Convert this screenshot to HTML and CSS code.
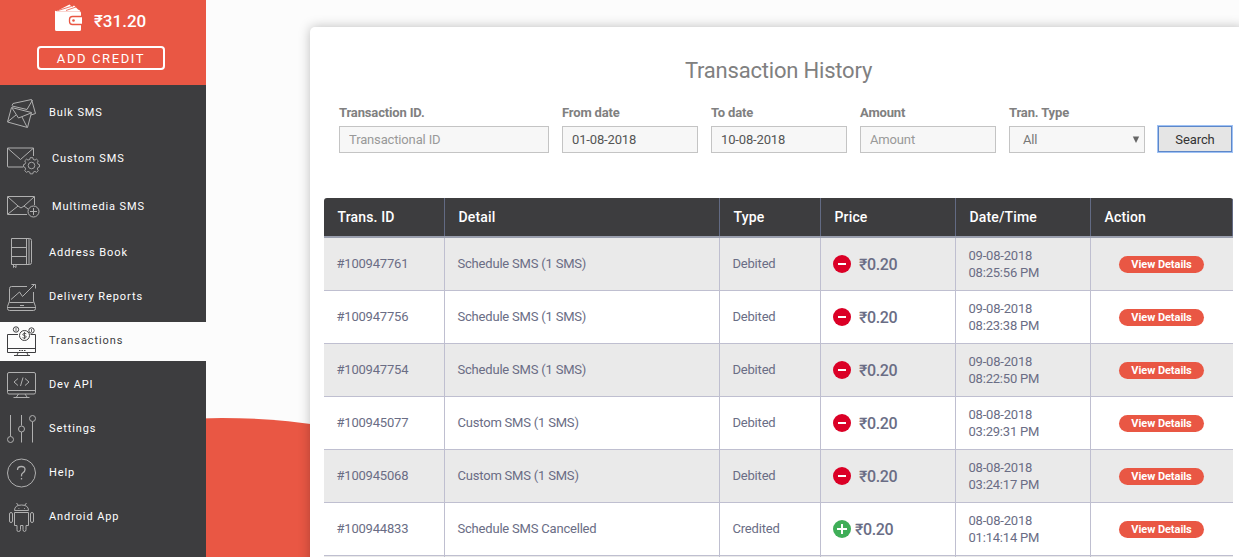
FILE: index.html
```html
<!DOCTYPE html>
<html lang="en">
<head>
<meta charset="utf-8">
<title>Transaction History</title>
<link rel="stylesheet" href="styles.css">
</head>
<body>
<div class="app">
  <aside class="sidebar">
    <div class="wallet">
      <div class="balance">
        <svg class="wallet-icon" width="28" height="28" viewBox="54 4 28 28"><path fill="#fff" d="M57 11 69.500 4.500 72 7 74 5.500 78 9.500 80 10.500V11Z"/><path d="m58 10.500 13-4M66 10.500l10-3.500" stroke="#e95744" stroke-width=".8" fill="none"/><path fill="#fff" d="M55 10.500q0 .8 2 .8H79.500Q81 11.500 81 13V29.500Q81 31 79.500 31H56.500Q55 31 55 29.500Z"/><path fill="#fff" stroke="#e95744" stroke-width="1.300" d="M83 16.500H72.500Q69.500 16.500 69.500 19.500V21.500Q69.500 24.500 72.500 24.500H83"/><circle cx="73.500" cy="20.500" r="1.300" fill="#e95744"/></svg>
        <span>₹31.20</span>
      </div>
      <button class="add-credit">ADD CREDIT</button>
    </div>
    <nav class="menu">
      <a class="item"><svg width="44" height="39" viewBox="0 94 44 39"><path d="m12 105.500 1-2 18.500-4 4 14-4.500 1.500M12 106l15 3.500 5.500-9.500M11.500 107.500l20 5-4 15-20-5.500ZM12 108l6.500 10 12.500-5M8 121.500l8-6.500M27 127l-5-10"/></svg><span>Bulk SMS</span></a>
      <a class="item tall"><svg width="44" height="43" viewBox="0 138 44 43"><path d="M23 167H8Q7.500 167 7.500 166V148H33.500V156M8 148.500 20.500 159.500 33 148.500"/><g transform="translate(31.500 165.500) scale(.87) translate(-31.500 -166.500)"><circle cx="31.500" cy="166.500" r="3.800"/><path d="M30 157.500h3l.5 2 2 .8 1.800-1.100 2 2-1.100 1.800.8 2 1.700.5v2.600l-1.700.5-.8 2 1.100 1.800-2 2-1.800-1.100-2 .8-.5 2h-3l-.5-2-2-.8-1.800 1.100-2-2 1.100-1.800-.8-2-1.700-.5V165.500l1.700-.5.8-2-1.100-1.800 2-2 1.800 1.100 2-.8Z"/></g></svg><span>Custom SMS</span></a>
      <a class="item tall"><svg width="44" height="43" viewBox="0 186 44 43"><path d="M27 214.500H7.500V196.500H34.500V205M8 197l10 9 3 2 3-2 10-9M8 214l10-8M24 206l4 3"/><circle cx="33.500" cy="211.500" r="5.500"/><path d="M30 211.500h7M33.500 208v7"/></svg><span>Multimedia SMS</span></a>
      <a class="item"><svg width="44" height="39" viewBox="0 234 44 39"><path d="M11.500 238.500H29.500Q31.500 238.500 31.500 240.500V262.500Q31.500 264.500 29.500 264.500H11.500ZM26.500 238.500v26M29 238.500v26M11.500 247.500h15M11.500 256.500h15M13.500 265v2.500l1-1 1.500 1V265"/></svg><span>Address Book</span></a>
      <a class="item"><svg width="44" height="39" viewBox="0 278 44 39"><path d="M27 286.500H11.500Q9.500 286.500 9.500 288.500V301L7.500 306.500V308.500Q7.500 310.500 9.500 310.500H33.500Q35.500 310.500 35.500 308.500V306.500L33.500 301V292M9.500 302.500H33.500M7.500 307.500h28M11 299.500l8.500-7.500 3 4.500 12.500-12.500M31.500 284.500h4v4M20 305.500h4"/></svg><span>Delivery Reports</span></a>
      <a class="item active"><svg width="44" height="39" viewBox="0 322 44 39"><path d="M18 334.500H7.500V352.500H35.500V334.500H30.500M7.500 348.500h28M18 353l-1 2M27 353l1 2M14 355.500h16M19 350.500h1.500M21.500 350.500H23M24 350.500h1.500"/><circle cx="24.500" cy="335.500" r="5"/><circle cx="16" cy="329.500" r="2.700"/><circle cx="31.500" cy="330.500" r="2.700"/><path stroke-width=".8" d="M26.300 333.800q-1.800-1.300-3.200 0t1.400 1.800 1.400 2-3.400 0M24.500 331.800v7.400M16 328v3M31.500 329v3"/></svg><span>Transactions</span></a>
      <a class="item"><svg width="44" height="39" viewBox="0 366 44 39"><path d="M9 372.500H34Q35.500 372.500 35.500 374V392.500Q35.500 394 34 394H9Q7.500 394 7.500 392.500V374Q7.500 372.500 9 372.500ZM7.500 390.500h28M18.500 394l-2 3M25 394l2 3M13.500 397.500h16M18 378.500l-4 3.500 4 3.500M25 378.500l4 3.500-4 3.500M23 377.500l-2.500 8.500"/></svg><span>Dev API</span></a>
      <a class="item"><svg width="44" height="39" viewBox="0 410 44 39"><path d="M10.500 415v21M21.500 415v10.500M21.500 432v10.500M32.500 422v20.500"/><circle cx="10.500" cy="439.500" r="3"/><circle cx="21.500" cy="429" r="3"/><circle cx="32.500" cy="418.500" r="3"/></svg><span>Settings</span></a>
      <a class="item"><svg width="44" height="39" viewBox="0 454 44 39"><circle cx="21.500" cy="473" r="14"/><path stroke-width="1.300" d="M17.500 470q0-3.500 3.800-3.500t3.700 3q0 2-2 3.300t-1.500 3.500M21.500 478v1.500"/></svg><span>Help</span></a>
      <a class="item"><svg width="44" height="39" viewBox="0 498 44 39"><path d="M14.500 510.500q0-5.500 7-5.500t7 5.500ZM16.500 503l2 2.500M26.500 503l-2 2.500M18.500 508.500h.8M24 508.500h.8M14.500 512.500H28.500V525.500H26V529.500Q26 531.500 24.500 531.500T23 529.500V525.500H20.500V529.500Q20.500 531.500 18.500 531.500T17 529.500V525.500H14.500Z"/><rect x="9.500" y="512.500" width="3" height="10" rx="1.500"/><rect x="30.500" y="512.500" width="3" height="10" rx="1.500"/></svg><span>Android App</span></a>
    </nav>
  </aside>
  <div class="backdrop"></div>
  <main class="panel">
    <h1>Transaction History</h1>
    <form class="filters">
      <label class="field wide">Transaction ID.<input type="text" placeholder="Transactional ID"></label>
      <label class="field">From date<input type="text" value="01-08-2018"></label>
      <label class="field">To date<input type="text" value="10-08-2018"></label>
      <label class="field">Amount<input type="text" placeholder="Amount"></label>
      <label class="field">Tran. Type<span class="select">All<svg width="8" height="8" viewBox="0 0 8 8"><path fill="#666" d="M.8 .5h6.400L4 7Z"/></svg></span></label>
      <button type="button" class="search">Search</button>
    </form>
    <div class="table">
      <div class="row head"><div>Trans. ID</div><div>Detail</div><div>Type</div><div>Price</div><div>Date/Time</div><div>Action</div></div>
      <div class="row"><div>#100947761</div><div>Schedule SMS (1 SMS)</div><div>Debited</div><div class="price"><i class="sign"></i>₹0.20</div><div class="date">09-08-2018<br>08:25:56 PM</div><div class="action"><a>View Details</a></div></div>
      <div class="row"><div>#100947756</div><div>Schedule SMS (1 SMS)</div><div>Debited</div><div class="price"><i class="sign"></i>₹0.20</div><div class="date">09-08-2018<br>08:23:38 PM</div><div class="action"><a>View Details</a></div></div>
      <div class="row"><div>#100947754</div><div>Schedule SMS (1 SMS)</div><div>Debited</div><div class="price"><i class="sign"></i>₹0.20</div><div class="date">09-08-2018<br>08:22:50 PM</div><div class="action"><a>View Details</a></div></div>
      <div class="row"><div>#100945077</div><div>Custom SMS (1 SMS)</div><div>Debited</div><div class="price"><i class="sign"></i>₹0.20</div><div class="date">08-08-2018<br>03:29:31 PM</div><div class="action"><a>View Details</a></div></div>
      <div class="row"><div>#100945068</div><div>Custom SMS (1 SMS)</div><div>Debited</div><div class="price"><i class="sign"></i>₹0.20</div><div class="date">08-08-2018<br>03:24:17 PM</div><div class="action"><a>View Details</a></div></div>
      <div class="row"><div>#100944833</div><div>Schedule SMS Cancelled</div><div>Credited</div><div class="price"><i class="sign plus"></i>₹0.20</div><div class="date">08-08-2018<br>01:14:14 PM</div><div class="action"><a>View Details</a></div></div>
      <div class="row"><div></div><div></div><div></div><div></div><div></div><div></div></div>
    </div>
  </main>
</div>
</body>
</html>
```

FILE: styles.css
```css
* { box-sizing: border-box; }
body { margin: 0; font-family: Roboto, sans-serif; background: #fcfcfc; overflow: hidden; }
.app { position: relative; display: flex; width: 1239px; height: 557px; overflow: hidden; }
.sidebar { position: relative; z-index: 1; width: 206px; height: 557px; background: #3d3d3f; flex: none; }
.wallet { height: 85px; background: #e95744; padding-top: 4px; display: flex; flex-direction: column; align-items: center; }
.balance { display: flex; gap: 12px; height: 34px; align-items: center; color: #fff; font-size: 17px; font-weight: 500; width: 98px; }
.wallet-icon { flex: none; margin-top: -6px; }
.add-credit { margin: 8px 4px 0 0; width: 128px; height: 24px; border: 2px solid #fff; border-radius: 4px; background: none; color: #fff; font: 400 13px/18px Roboto, sans-serif; letter-spacing: 1.6px; padding: 1px 0 0; }
.menu { display: flex; flex-direction: column; gap: 5px; padding-top: 9px; }
.item { display: flex; align-items: center; gap: 5px; height: 39px; color: #fff; font-size: 11px; font-weight: 400; letter-spacing: .9px; }
.item svg { flex: none; fill: none; stroke: #b0b0b0; stroke-width: 1; }
.item span { padding-bottom: 3px; }
.tall { height: 43px; gap: 8px; }
.active { background: #fcfcfc; color: #3d3d3f; }
.active svg { stroke: #3d3d3f; }
.backdrop { position: absolute; left: -453px; top: 418px; width: 1350px; height: 1350px; border-radius: 50%; background: #e95744; }
.panel { position: relative; flex: none; margin: 27px 0 0 104px; width: 935px; height: 600px; border-radius: 5px; background: #fff; box-shadow: 0 0 12px rgba(0,0,0,.25); padding: 31px 0 0 14px; }
h1 { margin: 0; width: 909px; text-align: center; font-size: 22px; line-height: 26px; font-weight: 400; letter-spacing: -.2px; color: #808080; }
.filters { display: flex; align-items: flex-end; gap: 13px; padding: 21px 0 0 15px; }
.field { display: flex; flex-direction: column; gap: 5px; width: 136px; color: #808080; font-size: 13px; line-height: 16px; font-weight: 700; letter-spacing: -.15px; }
.field.wide { width: 210px; }
.field input, .select { width: 100%; height: 27px; border: 1px solid #c4c4c4; border-radius: 0; background: #f7f7f7; padding: 0 9px; color: #555; font: 400 13px Roboto, sans-serif; letter-spacing: -.15px; }
.field input::placeholder { color: #999; opacity: 1; }
.select { display: flex; align-items: center; justify-content: space-between; padding: 0 4px 0 13px; color: #777; }
.search { width: 74px; height: 26px; margin-bottom: 1px; border: 1px solid #5d87c9; box-shadow: 0 0 0 1px #9fc2f5; background: #e5e5e5; color: #333; font: 400 13px Roboto, sans-serif; letter-spacing: -.1px; padding: 0; }
.table { margin-top: 45px; width: 909px; border-radius: 3px 3px 0 0; overflow: hidden; color: #6a6d85; font-size: 13px; line-height: 17px; letter-spacing: -.2px; }
.row { display: grid; grid-template-columns: 121px 275px 101px 135px 135px 142px; height: 53px; border-bottom: 1px solid #bfbfd0; background: #fff; }
.row:nth-child(even) { background: #eaeaea; }
.row > div { display: flex; align-items: center; padding: 0 12.500px 1px; border-right: 1px solid #bfbfd0; }
.row > div:last-child { border-right-color: transparent; }
.row.head { height: 40px; border-bottom: 2px solid #9a9fae; background: #3d3d3f; color: #fff; font-size: 14px; font-weight: 500; letter-spacing: .15px; }
.row.head > div { padding: 0 13.500px; border-color: #626a83; }
.row > .date { padding-bottom: 0; }
.row > .price { gap: 8px; padding: 0 12px; font-size: 16px; font-weight: 500; letter-spacing: -.35px; }
.sign { position: relative; width: 18px; height: 18px; border-radius: 50%; background: linear-gradient(#fff, #fff) 50% 50% / 8px 2px no-repeat #db0026; }
.sign.plus { background: linear-gradient(#fff, #fff) 50% 50% / 10px 2px no-repeat, linear-gradient(#fff, #fff) 50% 50% / 2px 10px no-repeat #3fae58; margin-right: -4px; }
.row > .action { justify-content: center; padding: 0; }
.action a { width: 85px; height: 17px; border-radius: 9px; background: #e95744; color: #fff; text-align: center; font-size: 11px; line-height: 17px; font-weight: 700; letter-spacing: -.05px; }
```
